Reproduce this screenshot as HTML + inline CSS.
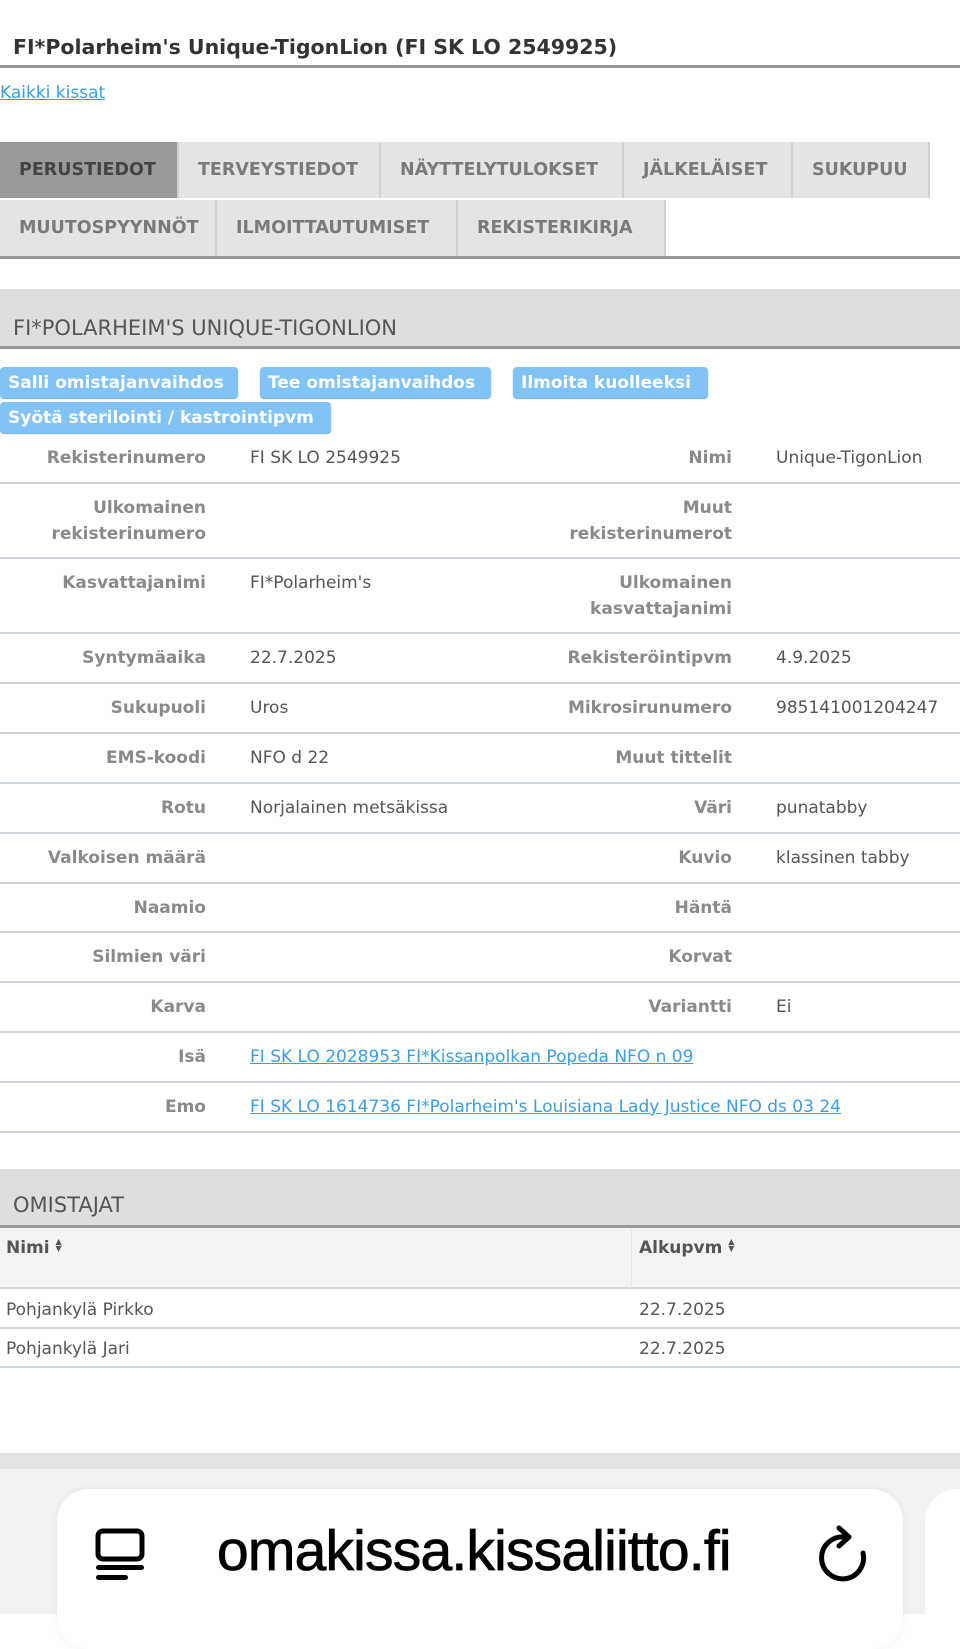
<!DOCTYPE html>
<html><head><meta charset="utf-8"><style>
*{margin:0;padding:0;box-sizing:border-box}
body{width:960px;height:1614px;background:#fff;font-family:"DejaVu Sans",Verdana,sans-serif;position:relative;overflow:hidden;color:#555}
.a{position:absolute}
.title{left:13px;top:35px;font-size:20.5px;font-weight:bold;color:#333;white-space:nowrap}
.hr{left:0;width:960px;height:3px;background:#999}
.link{color:#3a9ee0;text-decoration:underline;font-size:17px}
.tab{position:absolute;background:#e4e4e4;color:#7a7a7a;font-weight:bold;font-size:17.5px;display:flex;align-items:center;padding-left:19px;border-right:2px solid #d0d0d0;white-space:nowrap}
.sec{left:0;width:960px;background:#dedede;font-size:21px;color:#555;padding-left:13px}
.btn{position:absolute;background:#82c3f5;color:#fff;font-weight:bold;font-size:17px;border-radius:4px;padding-left:8px;display:flex;align-items:center;box-shadow:0 1px 1px #6aa8d8;white-space:nowrap}
.row{position:absolute;left:0;width:960px;border-bottom:2px solid #cfd6dd}
.lb{position:absolute;text-align:right;font-weight:bold;color:#8a8a8a;font-size:17px;line-height:26px;white-space:nowrap}
.l1{right:754px}
.l2{right:228px}
.v{position:absolute;font-size:17px;color:#555;line-height:26px;white-space:nowrap}
.v1{left:250px}.v2{left:776px}
.v a{color:#3a9ee0;text-decoration:underline}
.srt{display:inline-block;font-size:8px;line-height:7px;vertical-align:2px}
</style></head><body>
<div class="a title">FI*Polarheim's Unique-TigonLion (FI SK LO 2549925)</div>
<div class="a hr" style="top:65px"></div>
<div class="a link" style="left:0;top:83px">Kaikki kissat</div>

<div class="tab" style="left:0;top:142px;width:179px;height:56px;background:#9a9a9a;color:#444">PERUSTIEDOT</div>
<div class="tab" style="left:179px;top:142px;width:202px;height:56px">TERVEYSTIEDOT</div>
<div class="tab" style="left:381px;top:142px;width:243px;height:56px">NÄYTTELYTULOKSET</div>
<div class="tab" style="left:624px;top:142px;width:169px;height:56px">JÄLKELÄISET</div>
<div class="tab" style="left:793px;top:142px;width:137px;height:56px">SUKUPUU</div>
<div class="tab" style="left:0;top:200px;width:217px;height:56px">MUUTOSPYYNNÖT</div>
<div class="tab" style="left:217px;top:200px;width:241px;height:56px">ILMOITTAUTUMISET</div>
<div class="tab" style="left:458px;top:200px;width:208px;height:56px">REKISTERIKIRJA</div>
<div class="a hr" style="top:256px"></div>

<div class="a sec" style="top:289px;height:57px;line-height:78px">FI*POLARHEIM'S UNIQUE-TIGONLION</div>
<div class="a hr" style="top:346px"></div>

<div class="btn" style="left:0;top:367px;width:238px;height:31px">Salli omistajanvaihdos</div>
<div class="btn" style="left:260px;top:367px;width:231px;height:31px">Tee omistajanvaihdos</div>
<div class="btn" style="left:513px;top:367px;width:195px;height:31px">Ilmoita kuolleeksi</div>
<div class="btn" style="left:0;top:402px;width:331px;height:31px">Syötä sterilointi / kastrointipvm</div>

<div class="row" style="top:434px;height:50px"><div class="lb l1" style="top:11px">Rekisterinumero</div><div class="v v1" style="top:11px">FI SK LO 2549925</div><div class="lb l2" style="top:11px">Nimi</div><div class="v v2" style="top:11px">Unique-TigonLion</div></div>
<div class="row" style="top:484px;height:75px"><div class="lb l1" style="top:11px">Ulkomainen<br>rekisterinumero</div><div class="lb l2" style="top:11px">Muut<br>rekisterinumerot</div></div>
<div class="row" style="top:559px;height:75px"><div class="lb l1" style="top:11px">Kasvattajanimi</div><div class="v v1" style="top:11px">FI*Polarheim's</div><div class="lb l2" style="top:11px">Ulkomainen<br>kasvattajanimi</div></div>
<div class="row" style="top:634px;height:50px"><div class="lb l1" style="top:11px">Syntymäaika</div><div class="v v1" style="top:11px">22.7.2025</div><div class="lb l2" style="top:11px">Rekisteröintipvm</div><div class="v v2" style="top:11px">4.9.2025</div></div>
<div class="row" style="top:684px;height:50px"><div class="lb l1" style="top:11px">Sukupuoli</div><div class="v v1" style="top:11px">Uros</div><div class="lb l2" style="top:11px">Mikrosirunumero</div><div class="v v2" style="top:11px">985141001204247</div></div>
<div class="row" style="top:734px;height:50px"><div class="lb l1" style="top:11px">EMS-koodi</div><div class="v v1" style="top:11px">NFO d 22</div><div class="lb l2" style="top:11px">Muut tittelit</div></div>
<div class="row" style="top:784px;height:50px"><div class="lb l1" style="top:11px">Rotu</div><div class="v v1" style="top:11px">Norjalainen metsäkissa</div><div class="lb l2" style="top:11px">Väri</div><div class="v v2" style="top:11px">punatabby</div></div>
<div class="row" style="top:834px;height:50px"><div class="lb l1" style="top:11px">Valkoisen määrä</div><div class="lb l2" style="top:11px">Kuvio</div><div class="v v2" style="top:11px">klassinen tabby</div></div>
<div class="row" style="top:884px;height:49px"><div class="lb l1" style="top:11px">Naamio</div><div class="lb l2" style="top:11px">Häntä</div></div>
<div class="row" style="top:933px;height:50px"><div class="lb l1" style="top:11px">Silmien väri</div><div class="lb l2" style="top:11px">Korvat</div></div>
<div class="row" style="top:983px;height:50px"><div class="lb l1" style="top:11px">Karva</div><div class="lb l2" style="top:11px">Variantti</div><div class="v v2" style="top:11px">Ei</div></div>
<div class="row" style="top:1033px;height:50px"><div class="lb l1" style="top:11px">Isä</div><div class="v v1" style="top:11px"><a>FI SK LO 2028953 FI*Kissanpolkan Popeda NFO n 09</a></div></div>
<div class="row" style="top:1083px;height:50px"><div class="lb l1" style="top:11px">Emo</div><div class="v v1" style="top:11px"><a>FI SK LO 1614736 FI*Polarheim's Louisiana Lady Justice NFO ds 03 24</a></div></div>

<div class="a sec" style="top:1169px;height:56px;line-height:72px">OMISTAJAT</div>
<div class="a hr" style="top:1225px"></div>
<div class="a" style="left:0;top:1228px;width:960px;height:61px;background:#f3f3f3;border-bottom:2px solid #cfd6dd"></div>
<div class="a" style="left:631px;top:1228px;width:1px;height:60px;background:#e6e6e6"></div>
<div class="a" style="left:6px;top:1238px;font-weight:bold;font-size:17px;color:#555">Nimi <span class="srt">▲<br>▼</span></div>
<div class="a" style="left:639px;top:1238px;font-weight:bold;font-size:17px;color:#555">Alkupvm <span class="srt">▲<br>▼</span></div>
<div class="row" style="top:1289px;height:40px"><div class="v" style="left:6px;top:8px">Pohjankylä Pirkko</div><div class="v" style="left:639px;top:8px">22.7.2025</div></div>
<div class="row" style="top:1329px;height:39px"><div class="v" style="left:6px;top:7px">Pohjankylä Jari</div><div class="v" style="left:639px;top:7px">22.7.2025</div></div>

<div class="a" style="left:0;top:1453px;width:960px;height:16px;background:#e3e3e3"></div>
<div class="a" style="left:0;top:1469px;width:960px;height:145px;background:#f1f2f3"></div>
<div class="a" style="left:57px;top:1489px;width:846px;height:160px;background:#fff;border-radius:32px;box-shadow:0 0 8px rgba(0,0,0,0.06)"></div>
<div class="a" style="left:925px;top:1489px;width:80px;height:160px;background:#fff;border-radius:32px"></div>
<svg class="a" style="left:94px;top:1528px" width="52" height="54" viewBox="0 0 52 54"><rect x="4" y="3" width="44" height="28" rx="5" fill="none" stroke="#000" stroke-width="5"/><rect x="2" y="37" width="48" height="5" rx="2.5" fill="#000"/><rect x="2" y="47" width="32" height="5" rx="2.5" fill="#000"/></svg>
<div class="a" style="left:217px;top:1518px;font-family:'Liberation Sans',sans-serif;font-size:57px;color:#000;letter-spacing:-0.8px;-webkit-text-stroke:0.8px #000">omakissa.kissaliitto.fi</div>
<svg class="a" style="left:815px;top:1525px" width="56" height="58" viewBox="0 0 56 58"><path d="M30 12 A21 21 0 1 0 48 28" fill="none" stroke="#000" stroke-width="5" stroke-linecap="round"/><path d="M24 3 L34 12 L24 21" fill="none" stroke="#000" stroke-width="5" stroke-linecap="round" stroke-linejoin="round"/></svg>
</body></html>
